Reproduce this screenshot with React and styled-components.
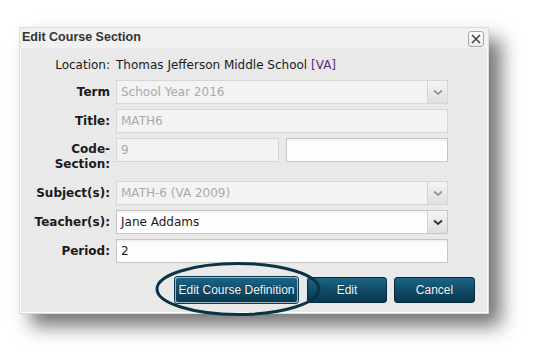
import React from 'react';
import styled, { createGlobalStyle } from 'styled-components';

const GlobalStyle = createGlobalStyle`
  html, body {
    margin: 0;
    padding: 0;
    background: #fff;
  }
  body {
    font-family: "DejaVu Sans", sans-serif;
    font-size: 12px;
    color: #1a1a1a;
  }
`;

const Page = styled.div`
  padding: 27px 0 0 19px;
  width: 539px;
  height: 357px;
  box-sizing: border-box;
`;

const Dialog = styled.div`
  width: 470px;
  background: #f1f1f1;
  border: 1px solid #dcdcdc;
  box-sizing: border-box;
  box-shadow: 12px 12px 18px rgba(0, 0, 0, 0.55);
`;

const TitleBar = styled.div`
  height: 20px;
  display: flex;
  align-items: center;
  justify-content: space-between;
  padding: 0 4px 0 2px;
`;

const Title = styled.div`
  font-family: "Liberation Sans", Arial, sans-serif;
  font-weight: bold;
  font-size: 12.5px;
  color: #333;
  margin-top: -3px;
`;

const CloseButton = styled.button`
  width: 16px;
  height: 16px;
  padding: 0;
  margin-top: 1px;
  border: 1px solid #a8a8a8;
  border-radius: 3px;
  background: linear-gradient(#ffffff, #ececec);
  display: flex;
  align-items: center;
  justify-content: center;
`;

const Body = styled.div`
  background: #e9e9e9;
  border: 1px solid #fafafa;
  border-top: none;
  padding: 8px 39px 9px 0;
  display: flex;
  flex-direction: column;
  gap: 5px;
`;

const Row = styled.div`
  display: grid;
  grid-template-columns: 89px 1fr;
  column-gap: 6px;
  align-items: ${p => (p.$top ? 'start' : 'center')};
  min-height: ${p => p.$height || 24}px;
  margin-bottom: ${p => p.$after || 0}px;
`;

const Label = styled.label`
  text-align: right;
  font-weight: ${p => (p.$plain ? 'normal' : 'bold')};
  line-height: 15px;
  color: #1a1a1a;
  padding-top: ${p => p.$pad || 0}px;
`;

const Value = styled.div`
  color: #1a1a1a;
`;

const Purple = styled.span`
  color: #5a2a7a;
`;

const Field = styled.div`
  height: 24px;
  box-sizing: border-box;
  border: 1px solid ${p => (p.$disabled ? '#d6d6d6' : '#c6c6c6')};
  background: ${p =>
    p.$disabled
      ? '#f3f3f3'
      : 'linear-gradient(#ececec 0, #fdfdfd 3px, #ffffff 100%)'};
  color: ${p => (p.$disabled ? '#aaaaaa' : '#1a1a1a')};
  display: flex;
  align-items: center;
  padding-left: 4px;
  flex: ${p => p.$flex || 'none'};
`;

const SelectBox = styled(Field)`
  padding-right: 0;
  justify-content: space-between;
`;

const Arrow = styled.div`
  width: 19px;
  height: 22px;
  border-left: 1px solid #d4d4d4;
  background: linear-gradient(#f4f4f4, #e0e0e0);
  display: flex;
  align-items: center;
  justify-content: center;
`;

const Pair = styled.div`
  display: flex;
  gap: 7px;
`;

const Buttons = styled.div`
  display: flex;
  justify-content: flex-end;
  gap: 7px;
  margin-top: 9px;
  margin-right: -27px;
`;

const Highlight = styled.div`
  position: relative;
  margin-right: 2px;
`;

const Ring = styled.svg`
  position: absolute;
  left: -20px;
  top: -16px;
  pointer-events: none;
`;

const Button = styled.button`
  height: 26px;
  width: ${p => p.$width}px;
  font-family: "Liberation Sans", Arial, sans-serif;
  font-size: 12px;
  color: #f2f6f8;
  border: 1px solid ${p => (p.$focus ? '#9fb6c2' : '#062a3b')};
  border-radius: 3px;
  background: linear-gradient(#1d6586 0%, #0f4b67 50%, #093a52 100%);
  text-shadow: 0 0 1px rgba(0, 0, 0, 0.4);
  box-shadow: ${p => (p.$focus ? '0 0 0 1px #0a3a52' : 'none')};
  padding: 0;
`;

const Chevron = ({ color }) => (
  <svg width="10" height="7" viewBox="0 0 10 7">
    <path d="M1 1.5 L5 5 L9 1.5" fill="none" stroke={color} strokeWidth="2" />
  </svg>
);

const Select = ({ children, disabled }) => (
  <SelectBox $disabled={disabled}>
    <span>{children}</span>
    <Arrow>
      <Chevron color={disabled ? '#9a9a9a' : '#333'} />
    </Arrow>
  </SelectBox>
);

export default function App() {
  return (
    <Page>
      <GlobalStyle />
      <Dialog>
        <TitleBar>
          <Title>Edit Course Section</Title>
          <CloseButton aria-label="Close">
            <svg width="10" height="10" viewBox="0 0 10 10">
              <path d="M1 1 L9 9 M9 1 L1 9" stroke="#444" strokeWidth="1.6" />
            </svg>
          </CloseButton>
        </TitleBar>
        <Body>
          <Row $height={18} $after={1}>
            <Label $plain>Location:</Label>
            <Value>
              Thomas Jefferson Middle School <Purple>[VA]</Purple>
            </Value>
          </Row>
          <Row>
            <Label>Term</Label>
            <Select disabled>School Year 2016</Select>
          </Row>
          <Row>
            <Label>Title:</Label>
            <Field $disabled>MATH6</Field>
          </Row>
          <Row $top $height={38}>
            <Label $pad={4}>
              Code-
              <br />
              Section:
            </Label>
            <Pair>
              <Field $disabled $flex="0 0 163px">9</Field>
              <Field $flex="1" />
            </Pair>
          </Row>
          <Row>
            <Label>Subject(s):</Label>
            <Select disabled>MATH-6 (VA 2009)</Select>
          </Row>
          <Row>
            <Label>Teacher(s):</Label>
            <Select>Jane Addams</Select>
          </Row>
          <Row>
            <Label>Period:</Label>
            <Field>2</Field>
          </Row>
          <Buttons>
            <Highlight>
              <Button $width={123} $focus>Edit Course Definition</Button>
              <Ring width="166" height="56" viewBox="0 0 166 56">
                <ellipse cx="83" cy="28" rx="81" ry="25.5" fill="none" stroke="#0b3347" strokeWidth="3" />
              </Ring>
            </Highlight>
            <Button $width={80}>Edit</Button>
            <Button $width={81}>Cancel</Button>
          </Buttons>
        </Body>
      </Dialog>
    </Page>
  );
}
